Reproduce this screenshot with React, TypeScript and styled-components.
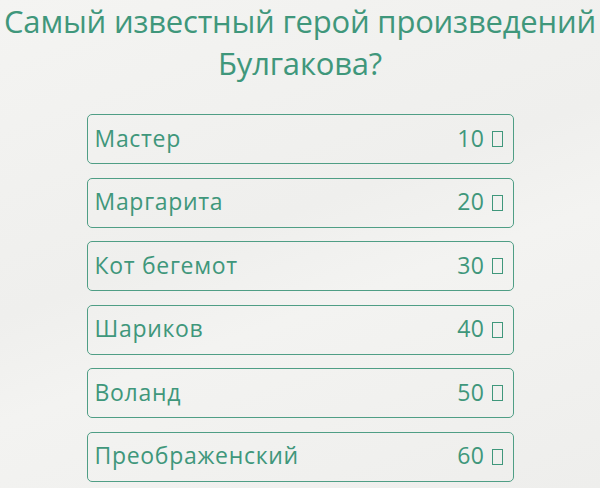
import styled, { createGlobalStyle } from "styled-components";

const GlobalStyle = createGlobalStyle`
  html, body {
    margin: 0;
    padding: 0;
    background: #f1f1ef;
  }
  body {
    font-family: "Open Sans", "Noto Sans", sans-serif;
  }
`;

const Page = styled.div`
  width: 600px;
  height: 488px;
  overflow: hidden;
  background: linear-gradient(160deg, #f4f4f2 0%, #efefed 45%, #f3f3f1 60%, #eeeeec 100%);
  color: #3f977b;
`;

const Title = styled.h1`
  margin: 0;
  font-size: 31px;
  font-weight: 400;
  line-height: 42px;
  text-align: center;
  letter-spacing: -0.2px;
`;

const List = styled.ul`
  list-style: none;
  margin: 30px auto 0;
  padding: 0;
  width: 427px;
  display: flex;
  flex-direction: column;
  gap: 13.6px;
`;

const Option = styled.li`
  box-sizing: border-box;
  height: 50px;
  display: flex;
  align-items: center;
  justify-content: space-between;
  padding: 0 10px 0 7px;
  border: 1.5px solid #4f9e85;
  border-radius: 5px;
  font-size: 23px;
  line-height: 1;
`;

const Label = styled.span`
  padding-bottom: 2px;
  letter-spacing: 0.7px;
`;

const Points = styled.span`
  display: flex;
  align-items: center;
  gap: 7px;
  padding-bottom: 2px;
  letter-spacing: 0.5px;
`;

const Tofu = styled.span`
  display: inline-block;
  box-sizing: border-box;
  width: 11px;
  height: 16px;
  border: 1.5px solid #3f977b;
  margin-top: 2px;
`;

const options = [
  { name: "Мастер", points: 10 },
  { name: "Маргарита", points: 20 },
  { name: "Кот бегемот", points: 30 },
  { name: "Шариков", points: 40 },
  { name: "Воланд", points: 50 },
  { name: "Преображенский", points: 60 },
];

const App = () => {
  return (
    <Page>
      <GlobalStyle />
      <Title>
        Самый известный герой произведений
        <br />
        Булгакова?
      </Title>
      <List>
        {options.map((o) => (
          <Option key={o.name}>
            <Label>{o.name}</Label>
            <Points>
              {o.points}
              <Tofu />
            </Points>
          </Option>
        ))}
      </List>
    </Page>
  );
};

export default App;
